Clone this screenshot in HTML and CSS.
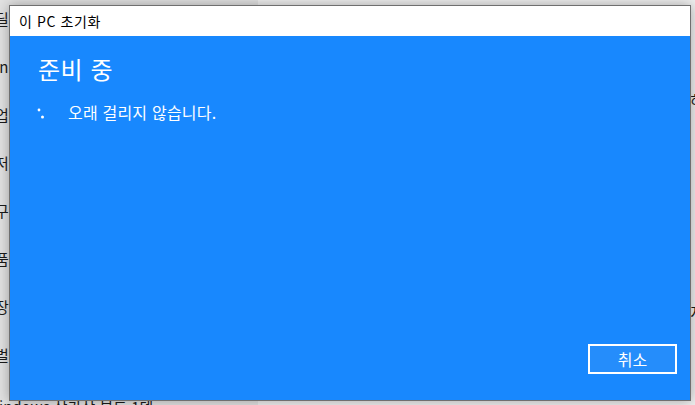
FILE: index.html
```html
<!DOCTYPE html>
<html lang="ko">
    <head>
        <meta charset="utf-8">
        <title>이 PC 초기화</title>
        <link rel="stylesheet" href="styles.css">
    </head>
    <body>
        <div class="desktop">
            <div class="sidebar">
                <div class="side_item">딜</div>
                <div class="side_item">in</div>
                <div class="side_item">업</div>
                <div class="side_item">저</div>
                <div class="side_item">구</div>
                <div class="side_item">품</div>
                <div class="side_item">장</div>
                <div class="side_item">벌</div>
                <div class="side_foot">indows 상가상 뷰트 1텐</div>
            </div>
            <div class="content">
                <div class="content_item first">하</div>
                <div class="content_item second">저</div>
                <div class="content_item third">0</div>
            </div>
        </div>

        <div class="dialog">
            <div class="title_bar">이 PC 초기화</div>
            <div class="dialog_body">
                <h1 class="heading">준비 중</h1>
                <div class="status_row">
                    <svg class="spinner" width="20" height="20" viewBox="0 0 20 20">
                        <circle cx="3" cy="4" r="1.4" fill="#ffffff" />
                        <circle cx="6.5" cy="11" r="1.5" fill="#ffffff" />
                    </svg>
                    <span class="status_text">오래 걸리지 않습니다.</span>
                </div>
                <div class="footer">
                    <button class="cancel_button">취소</button>
                </div>
            </div>
        </div>
    </body>
</html>
```

FILE: styles.css
```css
html, body {
    margin: 0;
    padding: 0;
}

body {
    width: 695px;
    height: 405px;
    overflow: hidden;
    position: relative;
    font-family: "Noto Sans CJK KR", "Noto Sans", sans-serif;
    background-color: #efefef;
}

.desktop {
    display: grid;
    grid-template-columns: 258px 1fr;
    height: 405px;
}

.sidebar {
    background-color: #e2e2e2;
    padding-top: 8px;
    margin-left: -5px;
    font-size: 15px;
    color: #1a1a1a;
}

.side_item {
    height: 48px;
    line-height: 22px;
}

.side_foot {
    margin-top: 4px;
    margin-left: 4px;
    white-space: nowrap;
    font-size: 15px;
}

.content {
    display: flex;
    flex-direction: column;
    align-items: flex-end;
    margin-right: -9px;
    font-size: 15px;
    color: #1a1a1a;
}

.content_item {
    line-height: 22px;
}

.first {
    margin-top: 89px;
}

.second {
    margin-top: 190px;
}

.third {
    margin-top: 2px;
}

.dialog {
    position: absolute;
    left: 9px;
    top: 5px;
    width: 680px;
    height: 394px;
    border: 1px solid #6f6f6f;
    box-shadow: 0 0 12px rgba(0, 0, 0, 0.32);
    display: flex;
    flex-direction: column;
    background-color: #ffffff;
}

.title_bar {
    height: 30px;
    line-height: 30px;
    padding-left: 9px;
    font-size: 14px;
    letter-spacing: 0.6px;
    color: #000000;
    background-color: #ffffff;
}

.dialog_body {
    flex: 1;
    display: flex;
    flex-direction: column;
    background-color: #1888fe;
    padding: 15px 13px 26px 28px;
    color: #ffffff;
}

.heading {
    margin: 0;
    font-size: 24px;
    font-weight: normal;
    letter-spacing: 0.5px;
    line-height: 35px;
}

.status_row {
    display: flex;
    align-items: center;
    margin-top: 15px;
    height: 22px;
}

.spinner {
    margin-left: -2px;
    margin-top: 8px;
}

.status_text {
    margin-left: 12px;
    font-size: 16px;
    letter-spacing: 0.2px;
}

.footer {
    margin-top: auto;
    display: flex;
    justify-content: flex-end;
}

.cancel_button {
    width: 89px;
    height: 30px;
    border: 2px solid #ffffff;
    background-color: #258dfb;
    color: #ffffff;
    font-family: "Noto Sans CJK KR", "Noto Sans", sans-serif;
    font-size: 16px;
    padding: 0;
}
```
